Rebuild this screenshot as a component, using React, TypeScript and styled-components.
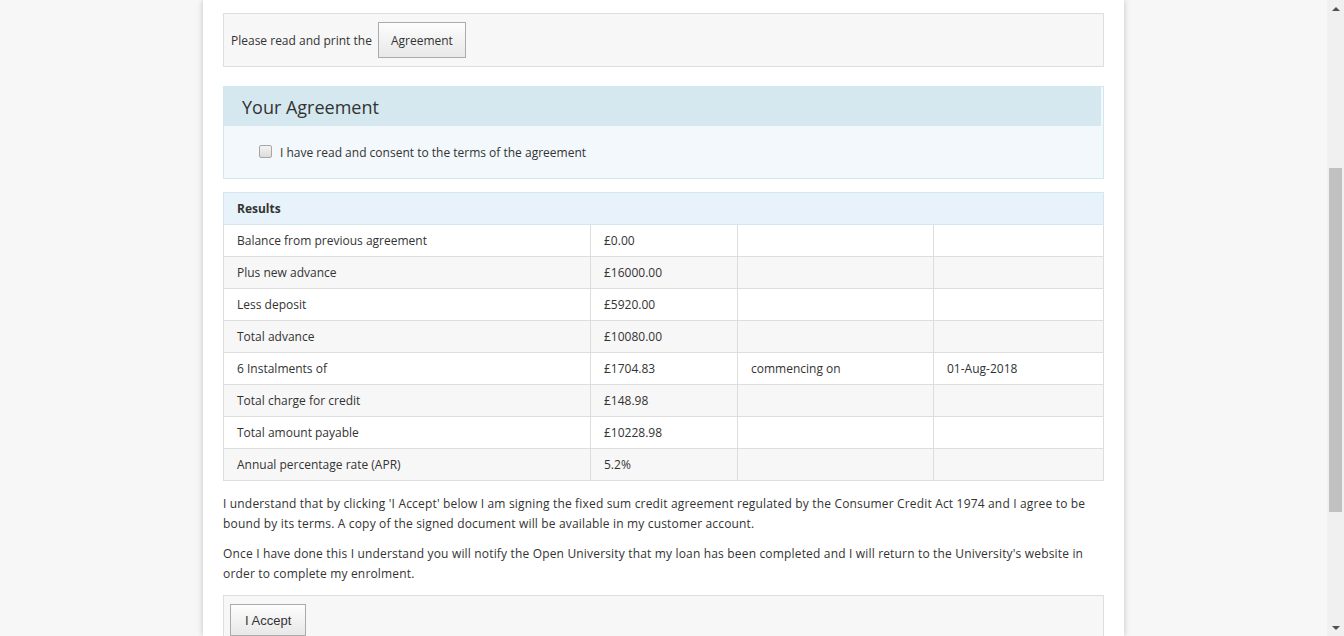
import React from "react";
import styled, { createGlobalStyle } from "styled-components";

const GlobalStyle = createGlobalStyle`
  html, body {
    margin: 0;
    padding: 0;
    overflow: hidden;
    background: #f7f7f7;
  }
  * {
    box-sizing: border-box;
  }
`;

const Screen = styled.div`
  display: flex;
  width: 1344px;
  height: 636px;
  overflow: hidden;
  font-family: "Open Sans", "Liberation Sans", sans-serif;
  font-size: 12px;
  color: #333;
`;

const Viewport = styled.div`
  flex: 1;
  display: flex;
  justify-content: center;
  background: #f7f7f7;
`;

const Page = styled.div`
  width: 921px;
  background: #fff;
  padding: 13px 20px 0;
  box-shadow: 0 0 6px rgba(0, 0, 0, 0.22);
  display: flex;
  flex-direction: column;
`;

const Well = styled.div<{ $mb?: number; $mt?: number }>`
  display: flex;
  align-items: center;
  background: #f7f7f7;
  border: 1px solid #dedede;
  padding: 8px 6px;
  margin-top: ${(p) => p.$mt ?? 0}px;
  margin-bottom: ${(p) => p.$mb ?? 0}px;
`;

const WellText = styled.span`
  margin: 0 6px 0 1px;
`;

const Button = styled.button<{ $arial?: boolean }>`
  height: ${(p) => (p.$arial ? 32 : 36)}px;
  padding: 0 ${(p) => (p.$arial ? 14 : 12)}px;
  border: 1px solid #ababab;
  border-radius: 0;
  background: linear-gradient(#fdfdfd, #e8e8e8);
  color: #333;
  font-family: ${(p) =>
    p.$arial ? `"Liberation Sans", Arial, sans-serif` : `"Open Sans", sans-serif`};
  font-size: ${(p) => (p.$arial ? 13 : 12)}px;
  cursor: pointer;
`;

const Panel = styled.div`
  border: 1px solid #d3e7ef;
  background: #f2f8fb;
  margin-bottom: 13px;
`;

const PanelHead = styled.div`
  height: 39px;
  background: #d5e8f0;
  margin-right: 2px;
  display: flex;
  align-items: center;
  padding-left: 18px;
  font-size: 18px;
  color: #333;
`;

const PanelBody = styled.label`
  display: flex;
  align-items: center;
  height: 52px;
  padding-left: 35px;
`;

const Check = styled.span`
  width: 13px;
  height: 13px;
  border: 1px solid #a6a6a6;
  border-radius: 2px;
  background: linear-gradient(#f4f4f4, #dcdcdc);
  margin-right: 8px;
  margin-top: -1px;
`;

const Table = styled.table`
  width: 100%;
  border-collapse: collapse;
  table-layout: fixed;
  border: 1px solid #ddd;
  margin-bottom: 13px;
`;

const HeadCell = styled.th`
  height: 32px;
  text-align: left;
  background: #e8f2fa;
  border: 1px solid #d3e7ef;
  padding: 0 13px;
  font-weight: 700;
  font-size: 12px;
  color: #333;
`;

const Row = styled.tr<{ $alt: boolean }>`
  background: ${(p) => (p.$alt ? "#f7f7f7" : "#fff")};
`;

const Cell = styled.td`
  height: 32px;
  border: 1px solid #ddd;
  padding: 0 13px;
  white-space: nowrap;
`;

const Para = styled.p`
  margin: 0 0 11px;
  line-height: 19.5px;
  letter-spacing: 0.17px;
`;

const Scrollbar = styled.div`
  width: 17px;
  background: #f0f0f0;
  display: flex;
  flex-direction: column;
  align-items: center;
`;

const Arrow = styled.div<{ $down?: boolean }>`
  height: 17px;
  width: 17px;
  display: flex;
  align-items: center;
  justify-content: center;
  &::after {
    content: "";
    border-left: 4px solid transparent;
    border-right: 4px solid transparent;
    ${(p) =>
      p.$down ? "border-top: 4px solid #505050;" : "border-bottom: 4px solid #505050;"}
  }
`;

const Track = styled.div`
  flex: 1;
  width: 100%;
  padding: 151px 2px 0;
`;

const Thumb = styled.div`
  height: 344px;
  background: #c1c1c1;
`;

const rows = [
  ["Balance from previous agreement", "£0.00", "", ""],
  ["Plus new advance", "£16000.00", "", ""],
  ["Less deposit", "£5920.00", "", ""],
  ["Total advance", "£10080.00", "", ""],
  ["6 Instalments of", "£1704.83", "commencing on", "01-Aug-2018"],
  ["Total charge for credit", "£148.98", "", ""],
  ["Total amount payable", "£10228.98", "", ""],
  ["Annual percentage rate (APR)", "5.2%", "", ""],
];

export default function App() {
  return (
    <>
      <GlobalStyle />
      <Screen>
        <Viewport>
          <Page>
            <Well $mb={19}>
              <WellText>Please read and print the</WellText>
              <Button>Agreement</Button>
            </Well>
            <Panel>
              <PanelHead>Your Agreement</PanelHead>
              <PanelBody>
                <Check />I have read and consent to the terms of the agreement
              </PanelBody>
            </Panel>
            <Table>
              <colgroup>
                <col style={{ width: 367 }} />
                <col style={{ width: 147 }} />
                <col style={{ width: 196 }} />
                <col />
              </colgroup>
              <thead>
                <tr>
                  <HeadCell colSpan={4}>Results</HeadCell>
                </tr>
              </thead>
              <tbody>
                {rows.map((r, i) => (
                  <Row key={i} $alt={i % 2 === 1}>
                    {r.map((c, j) => (
                      <Cell key={j}>{c}</Cell>
                    ))}
                  </Row>
                ))}
              </tbody>
            </Table>
            <Para>
              I understand that by clicking 'I Accept' below I am signing the fixed sum credit
              agreement regulated by the Consumer Credit Act 1974 and I agree to be bound by its
              terms. A copy of the signed document will be available in my customer account.
            </Para>
            <Para>
              Once I have done this I understand you will notify the Open University that my loan
              has been completed and I will return to the University's website in order to
              complete my enrolment.
            </Para>
            <Well $mt={1}>
              <Button $arial>I Accept</Button>
            </Well>
          </Page>
        </Viewport>
        <Scrollbar>
          <Arrow />
          <Track>
            <Thumb />
          </Track>
          <Arrow $down />
        </Scrollbar>
      </Screen>
    </>
  );
}
